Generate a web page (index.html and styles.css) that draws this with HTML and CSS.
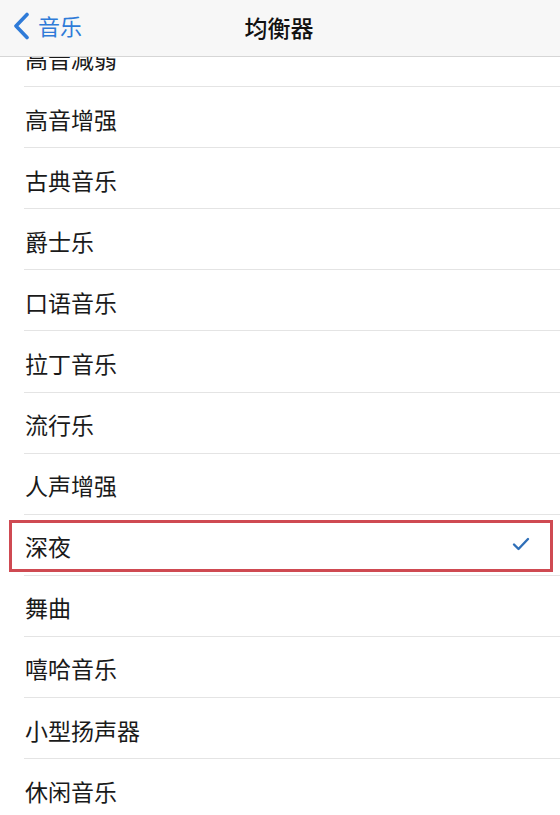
FILE: index.html
```html
<!DOCTYPE html>
<html lang="zh-CN">
<head>
<meta charset="utf-8">
<title>均衡器</title>
<link rel="stylesheet" href="styles.css">
</head>
<body>
<div class="screen">
  <header class="nav">
    <div class="back">
      <svg class="chev" width="18" height="28" viewBox="0 0 18 28"><path d="M15 2.5 L4 14 L15 25.5" fill="none" stroke="#2f7bd8" stroke-width="3.6" stroke-linecap="round" stroke-linejoin="round"/></svg>
      <span class="back-label">音乐</span>
    </div>
    <div class="title">均衡器</div>
  </header>
  <div class="viewport">
    <ul class="list">
      <li class="row"><span class="label">高音减弱</span></li>
      <li class="row"><span class="label">高音增强</span></li>
      <li class="row"><span class="label">古典音乐</span></li>
      <li class="row"><span class="label">爵士乐</span></li>
      <li class="row"><span class="label">口语音乐</span></li>
      <li class="row"><span class="label">拉丁音乐</span></li>
      <li class="row"><span class="label">流行乐</span></li>
      <li class="row"><span class="label">人声增强</span></li>
      <li class="row selected"><span class="label">深夜</span>
        <svg class="check" width="18" height="14" viewBox="0 0 18 14"><path d="M2 7.5 L6.5 12 L16 2" fill="none" stroke="#2f6fb8" stroke-width="2.4" stroke-linecap="round" stroke-linejoin="round"/></svg>
      </li>
      <li class="row"><span class="label">舞曲</span></li>
      <li class="row"><span class="label">嘻哈音乐</span></li>
      <li class="row"><span class="label">小型扬声器</span></li>
      <li class="row"><span class="label">休闲音乐</span></li>
    </ul>
  </div>
</div>
</body>
</html>
```
FILE: styles.css
```css
* { box-sizing: border-box; }
html, body { margin: 0; padding: 0; background: #fff; }
body {
  font-family: "Noto Sans CJK SC", "Noto Sans", sans-serif;
  color: #1a1a1a;
}
.screen {
  width: 560px;
  height: 815px;
  overflow: hidden;
  display: flex;
  flex-direction: column;
}
.nav {
  position: relative;
  z-index: 2;
  height: 57px;
  flex: none;
  background: #f7f7f7;
  border-bottom: 1px solid #d6d6d6;
  display: flex;
  align-items: center;
  justify-content: center;
}
.back {
  position: absolute;
  left: 12px;
  top: 12px;
  display: flex;
  align-items: center;
  gap: 8px;
  color: #2f7bd8;
}
.chev { display: block; }
.back-label {
  font-size: 22px;
  line-height: 30px;
  margin-top: -3px;
}
.title {
  font-size: 23px;
  font-weight: 500;
  line-height: 30px;
  margin-top: -2px;
  margin-left: -2px;
  color: #111;
}
.viewport {
  flex: 1;
  overflow: hidden;
  position: relative;
  z-index: 1;
}
.list {
  list-style: none;
  margin: -31px 0 0 0;
  padding: 0 0 0 24px;
}
.row {
  position: relative;
  height: 61.1px;
  border-bottom: 1px solid #e4e4e4;
  display: flex;
  align-items: center;
  padding-left: 1px;
  padding-top: 3px;
}
.label {
  font-size: 23px;
  line-height: 30px;
  letter-spacing: 0;
}
.check {
  position: absolute;
  right: 30px;
  top: 22px;
}
.selected::after {
  content: "";
  position: absolute;
  left: -15px;
  right: 7px;
  top: 5px;
  bottom: 3px;
  border: 3px solid #cf4a52;
}
```
